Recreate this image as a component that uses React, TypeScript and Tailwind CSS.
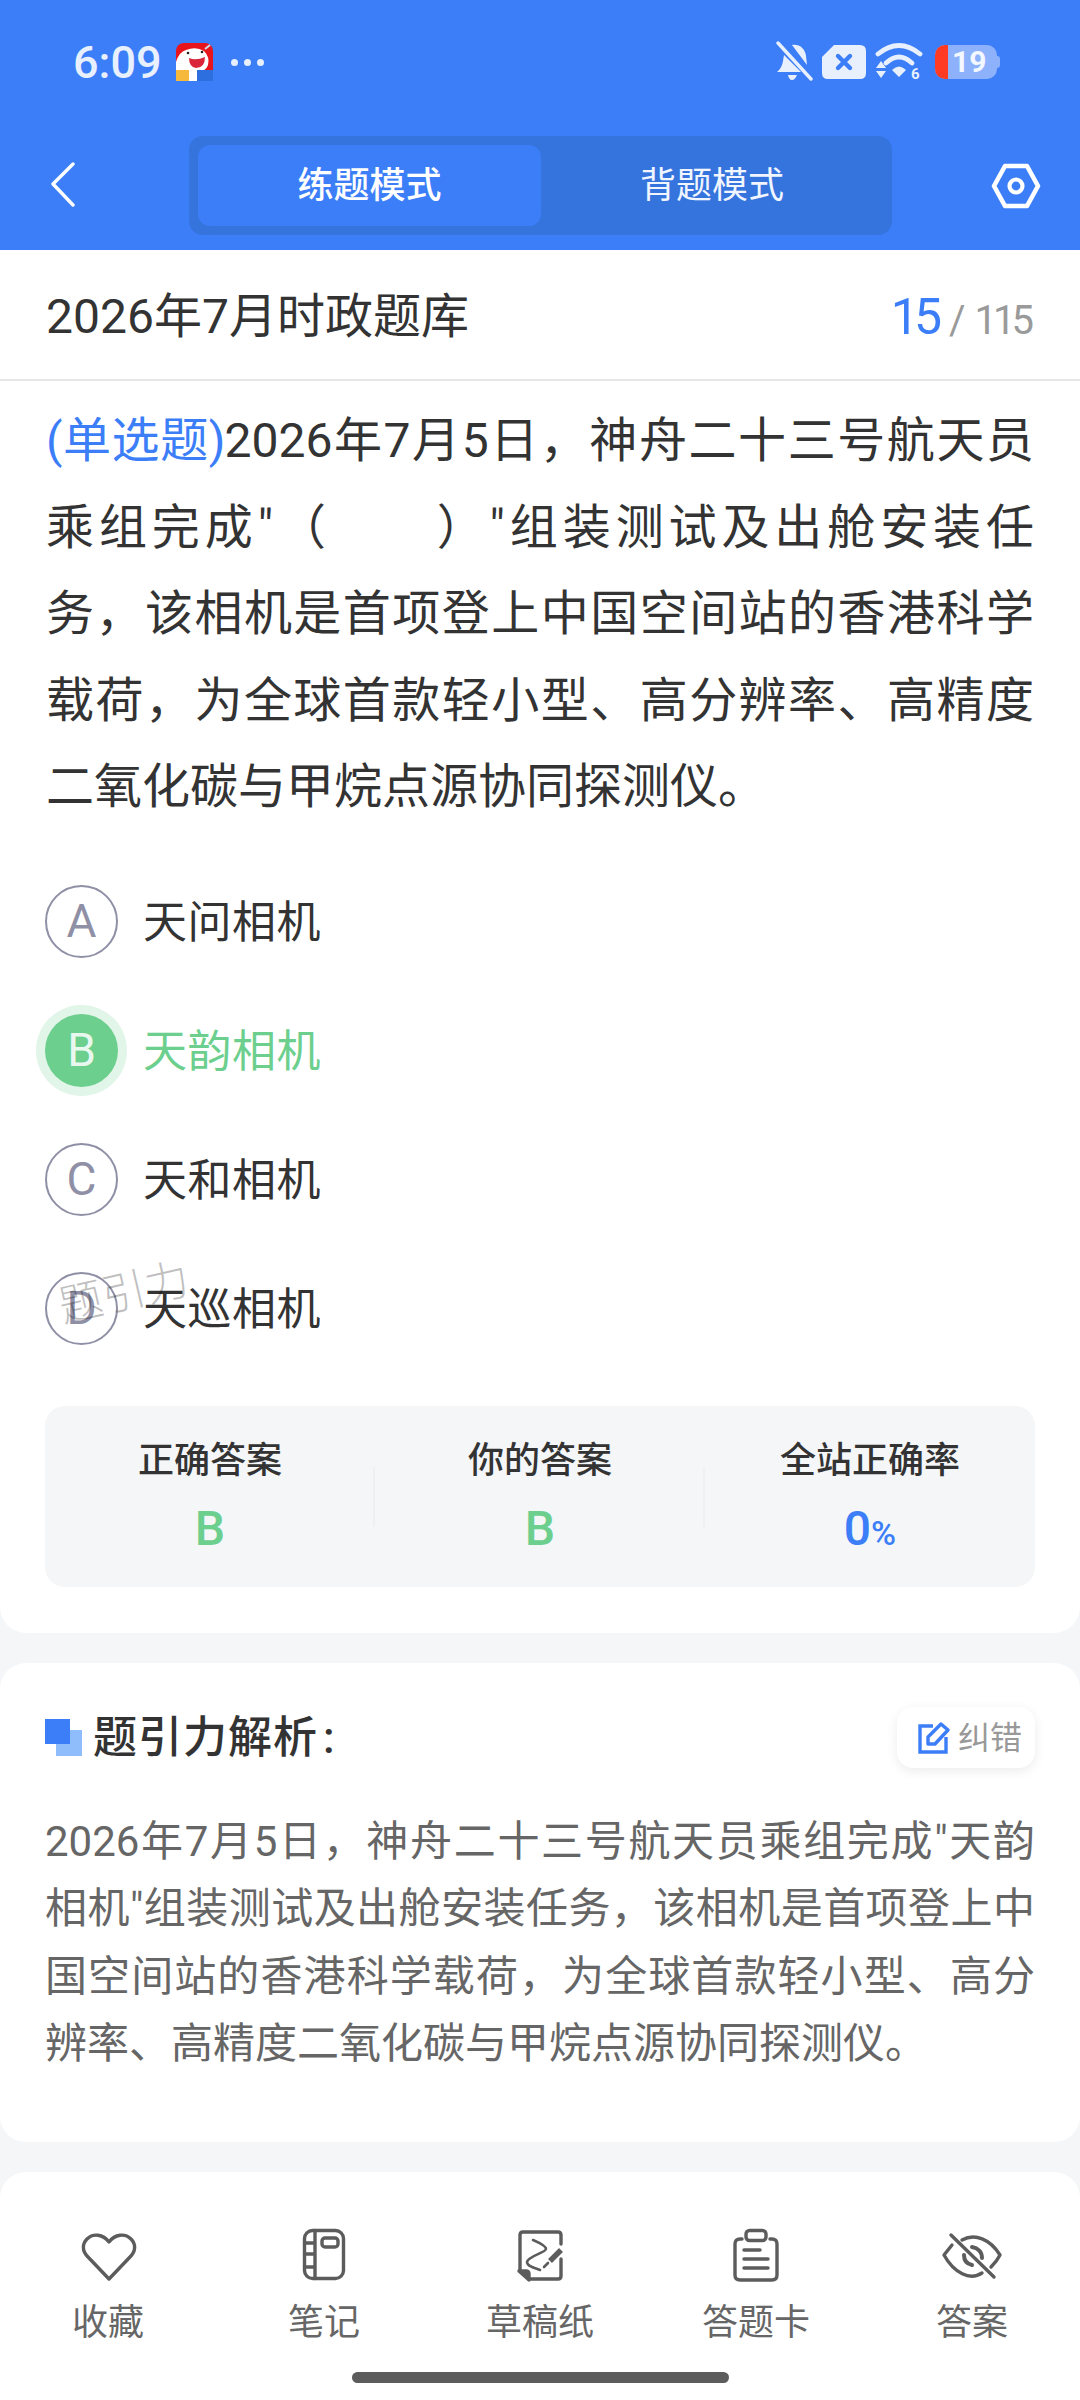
import React from "react";

const Pad = ({ children }: { children: React.ReactNode }) => (
  <svg width="64" height="60" viewBox="0 0 64 60" fill="none" stroke="#5c5c5c" strokeWidth="3.4" strokeLinecap="round" strokeLinejoin="round">
    {children}
  </svg>
);

const tools: { label: string; icon: React.ReactNode }[] = [
  {
    label: "收藏",
    icon: (
      <Pad>
        <path d="M33 54 L12 32 C6 26 6 19 11 14 C17 8 27 9 33 17 C39 9 49 8 55 14 C60 19 60 26 54 32 Z" />
      </Pad>
    ),
  },
  {
    label: "笔记",
    icon: (
      <Pad>
        <rect x="12.5" y="5.5" width="39" height="48" rx="8" />
        <path d="M23 5.5 V53.5 M12.5 18 H23 M12.5 29 H23 M12.5 42 H23" />
        <rect x="30" y="13" width="16" height="9" rx="3" />
      </Pad>
    ),
  },
  {
    label: "草稿纸",
    icon: (
      <Pad>
        <path d="M12 45 V10 Q12 7 15 7 H50 Q53 7 53 10 V19 M53 34 V51 Q53 54 50 54 H22" />
        <path d="M11 46 H18 Q21 46 21 49 V55 Z" fill="#5c5c5c" />
        <path d="M25 15 C32 18 38 21 38 24 C37 28 20 31 19 37 C19 41 26 43 32 45" strokeWidth="2.6" />
        <path d="M53 25 L42 36" strokeWidth="5.5" strokeLinecap="butt" />
        <path d="M40 38 L36 42" strokeWidth="2.6" />
      </Pad>
    ),
  },
  {
    label: "答题卡",
    icon: (
      <Pad>
        <path d="M18 14 H16 Q11 14 11 19 V50 Q11 55 16 55 H48 Q53 55 53 50 V19 Q53 14 48 14 H46" />
        <rect x="22" y="5.5" width="20" height="10" rx="3.5" />
        <path d="M20 25 H36 M20 34 H44 M20 43 H44" />
      </Pad>
    ),
  },
  {
    label: "答案",
    icon: (
      <Pad>
        <path d="M22 15 C35 8 50 14 60 30 C58 34 55 38 51 42" />
        <path d="M12 20 L4 30 C14 48 30 56 42 48" />
        <path d="M11 10 L54 52" />
        <path d="M32 22 C38 23 42 27 42 33" strokeWidth="4" />
        <path d="M24 30 C24 36 27 39 32 40" strokeWidth="4" />
      </Pad>
    ),
  },
];

const options = [
  { k: "A", t: "天问相机" },
  { k: "B", t: "天韵相机", on: true },
  { k: "C", t: "天和相机" },
  { k: "D", t: "天巡相机" },
];

function AppIcon() {
  return (
    <svg width="37" height="38" viewBox="0 0 37 38">
      <rect width="37" height="38" rx="8" fill="#e8141c" />
      <path d="M0 19 Q3 9 10 7 Q20 3 28 8 Q34 14 32 22 Q30 28 22 29 L0 29 Z" fill="#fff" />
      <path d="M13 15 Q20 18 29 14 Q29 25 20 25 Q13 24 13 15 Z" fill="#d9263a" />
      <circle cx="12" cy="10" r="1.3" fill="#222" />
      <circle cx="26" cy="9" r="1.3" fill="#222" />
      <path d="M29 6 L34 2" stroke="#cfd6e6" strokeWidth="2" />
      <rect y="27" width="13" height="11" fill="#f6b93b" />
      <rect x="13" y="28" width="9" height="10" fill="#fff" />
      <rect x="21" y="27" width="16" height="11" fill="#2e6fe0" />
    </svg>
  );
}

export default function App() {
  return (
    <div className="w-[1080px] h-[2400px] overflow-hidden flex flex-col bg-[#f4f6f8] text-[#333333] font-['Roboto','Noto_Sans_CJK_SC',sans-serif]">
      <header className="h-[250px] bg-[#3b7ef8] text-white shrink-0">
        <div className="h-[124px] flex items-center pl-[73px]">
          <span className="w-[103px] text-[45px] font-medium text-[#e8f0fe] leading-none">6:09</span>
          <AppIcon />
          <div className="flex gap-[6px] ml-[18px]">
            <i className="w-[7px] h-[7px] rounded-full bg-[#e8f0fe]" />
            <i className="w-[7px] h-[7px] rounded-full bg-[#e8f0fe]" />
            <i className="w-[7px] h-[7px] rounded-full bg-[#e8f0fe]" />
          </div>
          <div className="ml-auto mr-[80px] flex items-center">
            <svg width="38" height="42" viewBox="0 0 38 42" fill="#e8f0fe">
              <path d="M17 4 C25 3 30 8 31 15 L32 24 Z" />
              <path d="M9 14 L26 31 H2 Q7 27 8 20 Z" />
              <path d="M13 34 H22 Q20 39 17 39 Q14 39 13 34 Z" />
              <path d="M3 2 L36 38" stroke="#e8f0fe" strokeWidth="3.4" strokeLinecap="round" />
            </svg>
            <svg width="44" height="34" viewBox="0 0 44 34" className="ml-[9px]">
              <path d="M12 0 H38 Q44 0 44 6 V28 Q44 34 38 34 H6 Q0 34 0 28 V12 Z" fill="#e8f0fe" />
              <path d="M16 11 L28 23 M28 11 L16 23" stroke="#3b7ef8" strokeWidth="4.4" strokeLinecap="round" />
            </svg>
            <svg width="48" height="38" viewBox="0 0 48 38" fill="none" className="ml-[9px]">
              <path d="M3 11 Q24 -6 45 11" stroke="#e8f0fe" strokeWidth="4.8" strokeLinecap="round" />
              <path d="M11 20 Q24 8 37 20" stroke="#e8f0fe" strokeWidth="4.8" strokeLinecap="round" />
              <path d="M17 27 Q24 20 31 27 L24 34 Z" fill="#e8f0fe" />
              <path d="M6 18 L11 25 H1 Z M1 28 H11 L6 35 Z" fill="#e8f0fe" />
              <text x="36" y="36" fontSize="15" fontWeight="700" fill="#e8f0fe" fontFamily="Roboto">6</text>
            </svg>
            <div className="ml-[12px] flex items-center">
              <div className="w-[62px] h-[34px] rounded-[10px] flex items-center bg-[#8db2fb]">
                <div className="w-[13px] h-full rounded-l-[10px] bg-[#ff3b24]" />
                <span className="ml-[4px] text-[30px] font-bold leading-none text-[#f3f7ff]">19</span>
              </div>
              <div className="w-[3px] h-[12px] rounded-r-[3px] bg-[#8db2fb]" />
            </div>
          </div>
        </div>
        <div className="mt-[12px] h-[99px] flex items-center pl-[50px]">
          <svg width="139" height="46" viewBox="0 0 139 46" fill="none" stroke="#fff" strokeWidth="3.4" strokeLinecap="round" strokeLinejoin="round" className="-mt-[3px]">
            <path d="M23 3 L3 23 L23 44" />
          </svg>
          <div className="w-[703px] h-[99px] rounded-[14px] bg-[#3573dd] p-[9px] flex text-[36px] leading-none">
            <div className="w-[343px] flex items-center justify-center rounded-[12px] bg-[#3b7ef8] font-medium">练题模式</div>
            <div className="flex-1 flex items-center justify-center text-[#f0f5ff]">背题模式</div>
          </div>
          <svg width="50" height="46" viewBox="0 0 50 46" fill="none" stroke="#fff" className="ml-[99px]">
            <path d="M14 3 H36 L47 23 L36 43 H14 L3 23 Z" strokeWidth="4.6" strokeLinejoin="round" />
            <circle cx="25" cy="23" r="6.5" strokeWidth="4.2" />
          </svg>
        </div>
      </header>

      <section className="bg-white rounded-b-[26px] h-[1383px] shrink-0">
        <div className="h-[131px] border-b-2 border-[#e6e6e6] px-[46px] flex items-center justify-between">
          <h1 className="text-[48px] font-normal leading-none pt-[4px]">2026年7月时政题库</h1>
          <div className="flex items-baseline leading-none pt-[4px]">
            <span className="text-[50px] text-[#3b7ef8] tracking-[-5px]">15</span>
            <span className="ml-[12px] text-[40px] text-[#9a9a9a]">/</span>
            <span className="ml-[9px] text-[40px] text-[#9a9a9a] tracking-[-4px] mr-[4px]">115</span>
          </div>
        </div>
        <p className="mt-[17px] mx-[46px] text-[48px] leading-[86.5px] text-justify [text-justify:inter-character]">
          <span className="text-[#3b7ef8] tracking-[-1px]">(单选题)</span>2026年7月5日，神舟二十三号航天员乘组完成"（　　）"组装测试及出舱安装任务，该相机是首项登上中国空间站的香港科学载荷，为全球首款轻小型、高分辨率、高精度二氧化碳与甲烷点源协同探测仪。
        </p>
        <div className="mt-[26px] mx-[45px]">
          {options.map((o) => (
            <div key={o.k} className="h-[129px] flex items-center relative">
              {o.on ? (
                <div className="w-[73px] h-[73px] rounded-full bg-[#6ccf8e] ring-[9px] ring-[#e2f5e9] flex items-center justify-center text-[46px] text-[#e9f8ef]">
                  {o.k}
                </div>
              ) : (
                <div className="w-[73px] h-[73px] rounded-full border-2 border-[#8f90a6] flex items-center justify-center text-[46px] text-[#8f90a6]">
                  {o.k}
                </div>
              )}
              <span className={`ml-[25px] pt-[3px] text-[44px] tracking-[0.5px] ${o.on ? "text-[#6ccf8e]" : "text-[#333333]"}`}>{o.t}</span>
              {o.k === "D" && (
                <span className="absolute left-[13px] top-[27px] text-[44px] leading-none -rotate-[13deg] text-black/25 font-light">
                  题引力
                </span>
              )}
            </div>
          ))}
        </div>
        <div className="mt-[33px] mx-[45px] h-[181px] rounded-[20px] bg-[#f4f6f8] grid grid-cols-3">
          {[
            { l: "正确答案", v: "B" },
            { l: "你的答案", v: "B" },
            { l: "全站正确率", v: "0" },
          ].map((c, i) => (
            <div key={c.l} className="relative flex flex-col items-center pt-[37px]">
              <span className="text-[36px] leading-none font-medium">{c.l}</span>
              <span className={`mt-[26px] text-[48px] leading-none font-medium ${i < 2 ? "text-[#6ccf8e]" : "text-[#3b7ef8]"}`}>
                {c.v}
                {i === 2 && <span className="text-[34px]">%</span>}
              </span>
              {i < 2 && <div className="absolute right-0 top-[61px] h-[60px] w-[2px] bg-[#eef0f3]" />}
            </div>
          ))}
        </div>
      </section>

      <section className="mt-[30px] h-[479px] shrink-0 bg-white rounded-[26px] px-[45px] pt-[44px]">
        <div className="flex items-center justify-between h-[61px]">
          <div className="flex items-center">
            <div className="relative w-[37px] h-[37px]">
              <div className="absolute right-0 bottom-0 w-[26px] h-[26px] bg-[#8fbcfb]" />
              <div className="absolute left-0 top-0 w-[25px] h-[25px] bg-[#3b7ef8]" />
            </div>
            <h2 className="ml-[11px] text-[44px] leading-none font-medium tracking-[1px]">
              题引力解析<span className="ml-[5px]">:</span>
            </h2>
          </div>
          <div className="w-[138px] h-[61px] rounded-[16px] bg-white shadow-[0_3px_12px_rgba(0,0,0,0.08)] flex items-center pl-[21px]">
            <svg width="32" height="32" viewBox="0 0 32 32" fill="none" stroke="#3b7ef8" strokeWidth="3.4">
              <path d="M15 4 H2 V30 H28 V15" />
              <path d="M10 22 V15 L23 2 L30 8 L17 22 Z" strokeLinejoin="round" />
            </svg>
            <span className="ml-[8px] text-[32px] leading-none text-[#999999]">纠错</span>
          </div>
        </div>
        <p className="mt-[40px] text-[42px] leading-[67.3px] text-[#666666] text-justify [text-justify:inter-character]">
          2026年7月5日，神舟二十三号航天员乘组完成"天韵相机"组装测试及出舱安装任务，该相机是首项登上中国空间站的香港科学载荷，为全球首款轻小型、高分辨率、高精度二氧化碳与甲烷点源协同探测仪。
        </p>
      </section>

      <nav className="mt-[30px] flex-1 bg-white rounded-t-[26px] pt-[53px] flex flex-col">
        <div className="grid grid-cols-5">
          {tools.map((t) => (
            <div key={t.label} className="flex flex-col items-center">
              {t.icon}
              <span className="mt-[20px] text-[36px] leading-none text-[#666666]">{t.label}</span>
            </div>
          ))}
        </div>
        <div className="mt-[31px] mx-auto w-[377px] h-[11px] rounded-full bg-[#5c5c5c]" />
      </nav>
    </div>
  );
}
